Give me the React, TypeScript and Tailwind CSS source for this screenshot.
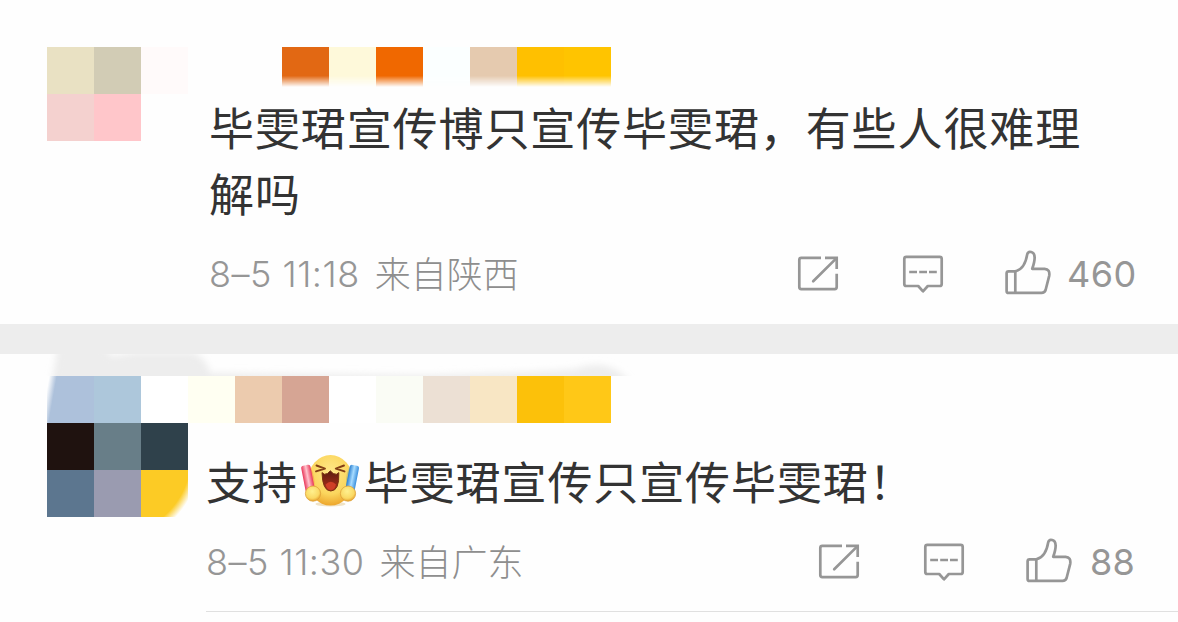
import React from 'react';

interface PostProps {
  avatar: string[];
  names: React.ReactNode;
  text: React.ReactNode;
  time: string;
  place: string;
  likes: number;
}

const NAME_TILES_TOP = [
  'bg-[#e26813]',
  'bg-[#fef9da]',
  'bg-[#f06800]',
  'bg-[#fbffff]',
  'bg-[#e5caaf]',
  'bg-[#ffc000]',
  'bg-[#ffc400]',
];

const NAME_TILES_BOTTOM = [
  'bg-[#fffff2]',
  'bg-[#eccbae]',
  'bg-[#d6a594]',
  'bg-white',
  'bg-[#fafcf5]',
  'bg-[#ece0d4]',
  'bg-[#f8e6c4]',
  'bg-[#fcc10a]',
  'bg-[#ffc817]',
];

function ShareIcon() {
  return (
    <svg width="42" height="44" viewBox="0 0 42 44" fill="none" stroke="#969696" strokeWidth="2.7">
      <path d="M24 6.9H4.3Q2.3 6.9 2.3 8.9V36.1Q2.3 38.1 4.3 38.1H37.7Q39.7 38.1 39.7 36.1V22.7" />
      <path d="M28 6.9H39.7V18" />
      <path d="M16.2 30.2L39 7.6" strokeLinecap="round" />
    </svg>
  );
}

function CommentIcon() {
  return (
    <svg width="42" height="44" viewBox="0 0 42 44" fill="none" stroke="#969696" strokeWidth="2.7" strokeLinejoin="round">
      <path d="M4.3 5.8H37.7Q39.7 5.8 39.7 7.8V33Q39.7 35 37.7 35H25.8L21 40.3L16.2 35H4.3Q2.3 35 2.3 33V7.8Q2.3 5.8 4.3 5.8Z" />
      <path d="M7.2 21H15M17.2 21H25M27 21H34.8" />
    </svg>
  );
}

function LikeIcon() {
  return (
    <svg width="48" height="46" viewBox="0 0 48 46" fill="none" stroke="#969696" strokeWidth="2.7" strokeLinejoin="round">
      <path d="M11.3 21.3H4.6Q2.6 21.3 2.6 23.3V40.9Q2.6 42.9 4.6 42.9H37.5Q40.6 42.9 41.6 40L45.2 25.8Q46.2 19.2 40.6 18.8H28.2C29.6 14.8 30.8 10.6 30.6 7.2C30.4 1 24.2 0.6 23.2 4.4C22 12 19.4 19.4 11.3 21.3Z" />
      <path d="M11.3 21.3V42.9" />
    </svg>
  );
}

function CheerEmoji() {
  return (
    <svg className="mr-[4px] ml-[2px] inline-block align-[-8px]" width="60" height="54" viewBox="0 0 60 54">
      <defs>
        <radialGradient id="face" cx="0.5" cy="0.35" r="0.65">
          <stop offset="0" stopColor="#ffe88a" />
          <stop offset="0.65" stopColor="#fbd65e" />
          <stop offset="1" stopColor="#eda62c" />
        </radialGradient>
        <radialGradient id="hand" cx="0.45" cy="0.35" r="0.65">
          <stop offset="0" stopColor="#fff08e" />
          <stop offset="0.7" stopColor="#fad964" />
          <stop offset="1" stopColor="#e7a32f" />
        </radialGradient>
        <linearGradient id="red">
          <stop offset="0" stopColor="#e93558" />
          <stop offset="0.5" stopColor="#ffc4cd" />
          <stop offset="1" stopColor="#e93558" />
        </linearGradient>
        <linearGradient id="blue">
          <stop offset="0" stopColor="#2b7fd0" />
          <stop offset="0.5" stopColor="#a8dcff" />
          <stop offset="1" stopColor="#3a8fdd" />
        </linearGradient>
        <linearGradient id="mouth" x2="0" y2="1">
          <stop offset="0" stopColor="#5a1c10" />
          <stop offset="1" stopColor="#b5301a" />
        </linearGradient>
      </defs>
      <ellipse cx="30.5" cy="50" rx="15" ry="2.6" fill="#f0e2c4" />
      <ellipse cx="30.5" cy="26.3" rx="22.5" ry="25.3" fill="url(#face)" />
      <path d="M11 14Q16 24 14 38L9 34Q7 24 11 14Z" fill="#f08048" opacity="0.45" />
      <path d="M49 14Q44 24 47 38L52 34Q54 24 49 14Z" fill="#92a987" opacity="0.45" />
      <rect x="3.2" y="11" width="9.4" height="27" rx="2.5" fill="url(#red)" transform="rotate(-11 8 24)" />
      <rect x="47.6" y="11" width="9.4" height="27" rx="2.5" fill="url(#blue)" transform="rotate(11 52 24)" />
      <g fill="none" stroke="#854016" strokeWidth="1.9" strokeLinecap="round" strokeLinejoin="round">
        <path d="M16.5 11.5L25 14.6L16 17.4" />
        <path d="M44 11.5L35.8 14.6L44.5 17.4" />
      </g>
      <path d="M22 18.6Q24 21.5 27.5 19.5L30.3 16.8L33.2 19.5Q37 21.5 38.8 18.6Q39.5 37 30.8 37Q22.5 37 22 18.6Z" fill="url(#mouth)" stroke="#78330f" strokeWidth="1" />
      <path d="M25.6 30.5Q30.8 25 36 30.5Q34.6 36 30.8 36Q27 36 25.6 30.5Z" fill="#cf3f26" />
      <circle cx="13" cy="39.6" r="7.6" fill="url(#hand)" stroke="#dea23a" strokeWidth="0.8" />
      <circle cx="48" cy="39.6" r="7.6" fill="url(#hand)" stroke="#dea23a" strokeWidth="0.8" />
    </svg>
  );
}

function Post({ avatar, names, text, time, place, likes }: PostProps) {
  return (
    <div className="flex">
      <div className="grid h-[141px] w-[141px] shrink-0 grid-cols-3 grid-rows-3">
        {avatar.map((color, i) => (
          <div key={i} className={color} />
        ))}
      </div>
      <div className="min-w-0 flex-1">
        {names}
        {text}
        <div className="flex h-[50px] items-center pr-[43px] text-[36px] text-[#969696]">
          <span className="mb-[1px] font-['Inter'] text-[36px] font-light tracking-[0.5px] whitespace-pre">{time}</span>
          <span className="mb-[4px] ml-[15px] font-['Noto_Sans_CJK_SC',sans-serif] font-light whitespace-nowrap text-[#8e8e8e]">{place}</span>
          <div className="ml-auto flex items-center">
            <div className="mb-[2px] flex items-center">
              <ShareIcon />
              <div className="w-[63px]" />
              <CommentIcon />
              <div className="w-[60px]" />
              <LikeIcon />
            </div>
            <span
              className={`font-['Inter'] text-[36px] font-[380] ${
                likes > 99 ? 'ml-[15px] w-[68px] tracking-[0.5px]' : 'ml-[17px] w-[45px] tracking-[0.2px]'
              }`}
            >
              {likes}
            </span>
          </div>
        </div>
      </div>
    </div>
  );
}

export default function App() {
  return (
    <div className="h-[622px] w-[1178px] overflow-hidden bg-[#fefefe] font-['Noto_Sans_CJK_SC',sans-serif]">
      <section className="h-[324px] pt-[47px] pl-[47px]">
        <Post
          avatar={[
            'bg-[#e9e1c3]', 'bg-[#d2ccb5]', 'bg-[#fffafa]',
            'bg-[#f4d1cf]', 'bg-[#ffc6ca]', 'bg-transparent',
            'bg-transparent', 'bg-transparent', 'bg-transparent',
          ]}
          names={
            <div className="flex h-[40px] pl-[94px] [mask-image:linear-gradient(#000_72%,transparent)]">
              {NAME_TILES_TOP.map((color, i) => (
                <div key={i} className={`w-[47px] ${color}`} />
              ))}
            </div>
          }
          text={
            <p className="mt-[7px] ml-[21px] text-[45px] leading-[66px] tracking-[0.9px] text-[#333] [&+div]:mt-[23px] [&+div]:ml-[21px]">
              毕雯珺宣传博只宣传毕雯珺，有些人很难理
              <br />
              解吗
            </p>
          }
          time="8–5 11:18"
          place="来自陕西"
          likes={460}
        />
      </section>

      <div className="h-[30px] bg-[#ededed]" />

      <section className="relative h-[268px] pt-[22px] pl-[47px]">
        {/* smudge left above the mosaic */}
        <svg className="absolute top-0 left-0" width="660" height="22" viewBox="0 0 660 22">
          <defs>
            <filter id="soft" x="-10%" y="-100%" width="120%" height="300%">
              <feGaussianBlur stdDeviation="3.5" />
            </filter>
          </defs>
          <g filter="url(#soft)">
            <path d="M50 40L58 -10H102L112 2L136 -2H192Q206 3 210 19L430 21Q540 18 575 15Q616 0 638 40Z" fill="#ededed" />
          </g>
        </svg>
        <Post
          avatar={[
            'bg-[linear-gradient(100deg,#fefefe_4%,#adc1db_18%)]', 'bg-[#adc7db]', 'bg-white',
            'bg-[#1f120f]', 'bg-[#687e88]', 'bg-[#2f414b]',
            'bg-[#5c768f]', 'bg-[#9a9bb0]', 'bg-[radial-gradient(circle_at_-30px_-14px,#fccb25_80px,#fefefe_89px)]',
          ]}
          names={
            <div className="flex h-[47px]">
              {NAME_TILES_BOTTOM.map((color, i) => (
                <div key={i} className={`w-[47px] ${color}`} />
              ))}
            </div>
          }
          text={
            <p className="mt-[25px] ml-[18px] h-[66px] text-[45px] leading-[66px] tracking-[0.9px] whitespace-nowrap text-[#333] [&+div]:mt-[23px] [&+div]:ml-[18px]">
              支持
              <CheerEmoji />
              毕雯珺宣传只宣传毕雯珺！
            </p>
          }
          time="8–5 11:30"
          place="来自广东"
          likes={88}
        />
        <div className="mt-[24px] ml-[159px] h-px bg-[#e0e0e0]" />
      </section>
    </div>
  );
}
